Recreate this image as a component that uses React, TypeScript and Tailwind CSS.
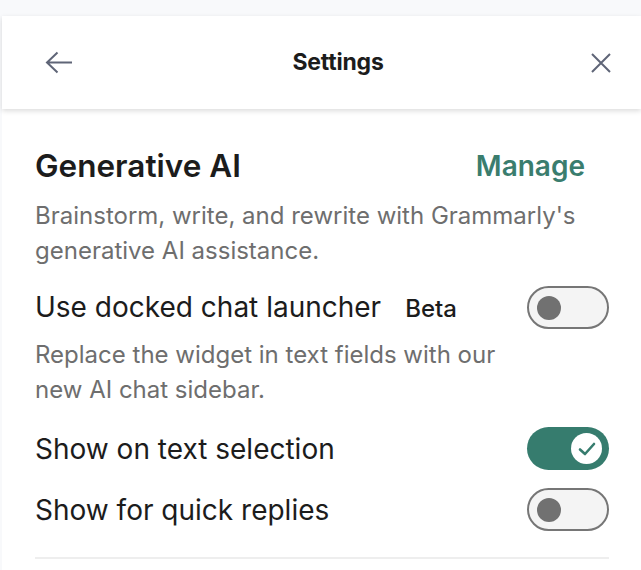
import React from "react";

function Toggle({ on }: { on: boolean }) {
  if (on) {
    return (
      <div className="w-[82px] h-[43px] rounded-full bg-[#367c6e] flex items-center justify-end pr-[7px] shrink-0">
        <div className="w-[31px] h-[31px] rounded-full bg-white flex items-center justify-center">
          <svg width="18" height="14" viewBox="0 0 18 14" fill="none">
            <path d="M2 7.5 L7 12 L16 2" stroke="#367c6e" strokeWidth="2.6" strokeLinecap="round" strokeLinejoin="round" />
          </svg>
        </div>
      </div>
    );
  }
  return (
    <div className="w-[82px] h-[43px] rounded-full bg-[#f4f4f4] border-2 border-[#767676] flex items-center pl-[8px] shrink-0">
      <div className="w-[24px] h-[24px] rounded-full bg-[#717171]" />
    </div>
  );
}

export default function App() {
  return (
    <div className="w-[641px] h-[570px] bg-[#f8f9fb] pt-4 overflow-hidden font-['Inter',sans-serif] text-[#1c1c1c]">
      <div className="ml-[2px] h-full bg-white">
        <div className="h-[93px] flex items-center justify-between pl-[43px] pr-[30px] shadow-[0_2px_5px_rgba(0,0,0,0.14)] relative">
          <svg width="28" height="23" viewBox="0 0 28 23" fill="none">
            <path d="M27 11.5 H2 M12.5 1.5 L2 11.5 L12.5 21.5" stroke="#5f6577" strokeWidth="2" />
          </svg>
          <div className="text-[23px] font-bold tracking-[-0.2px] ml-[12px]">Settings</div>
          <svg width="20" height="20" viewBox="0 0 20 20" fill="none">
            <path d="M1 1 L19 19 M19 1 L1 19" stroke="#5f6577" strokeWidth="2" />
          </svg>
        </div>
        <div className="pl-[33px] pr-[32px] pt-[39px]">
          <div className="flex items-center justify-between">
            <div className="text-[31.5px] font-semibold leading-[36px]">Generative AI</div>
            <div className="text-[28px] font-semibold text-[#3a7d6e] leading-[36px] mr-[24px]">Manage</div>
          </div>
          <div className="mt-[14px] text-[24px] leading-[35px] text-[#6e6e6e]">
            Brainstorm, write, and rewrite with Grammarly's
            <br />
            generative AI assistance.
          </div>
          <div className="mt-[18px] flex items-center justify-between">
            <div className="flex items-baseline">
              <span className="text-[28px] leading-[36px]">Use docked chat launcher</span>
              <span className="ml-[24px] text-[24px] font-medium">Beta</span>
            </div>
            <Toggle on={false} />
          </div>
          <div className="mt-[8px] text-[24px] leading-[35px] text-[#6e6e6e]">
            Replace the widget in text fields with our
            <br />
            new AI chat sidebar.
          </div>
          <div className="mt-[20px] flex items-center justify-between">
            <span className="text-[28px] leading-[36px]">Show on text selection</span>
            <Toggle on={true} />
          </div>
          <div className="mt-[18px] flex items-center justify-between">
            <span className="text-[28px] leading-[36px]">Show for quick replies</span>
            <Toggle on={false} />
          </div>
          <div className="mt-[26px] h-[2px] bg-[#eeeeee]" />
        </div>
      </div>
    </div>
  );
}
